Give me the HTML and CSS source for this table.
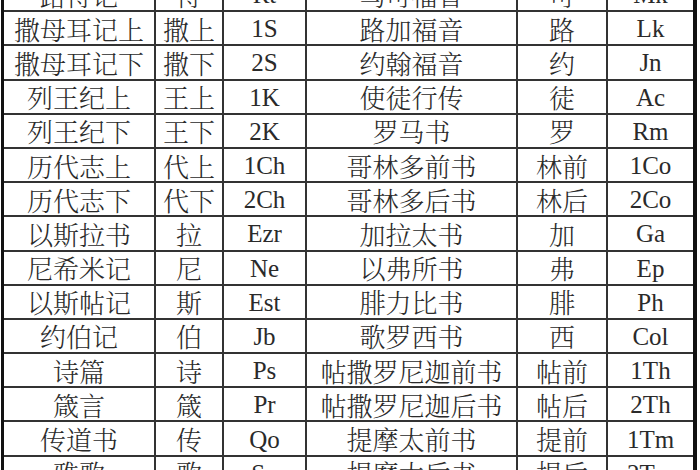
FILE: index.html
```html
<!DOCTYPE html>
<html lang="zh-CN">
<head>
<meta charset="utf-8">
<title>圣经书卷简称表</title>
<link rel="stylesheet" href="styles.css">
</head>
<body>
<div class="sheet">
  <div class="c">路得记</div><div class="c">得</div><div class="c lat">Rt</div><div class="c">马可福音</div><div class="c">可</div><div class="c lat">Mk</div>
  <div class="c">撒母耳记上</div><div class="c">撒上</div><div class="c lat">1S</div><div class="c">路加福音</div><div class="c">路</div><div class="c lat">Lk</div>
  <div class="c">撒母耳记下</div><div class="c">撒下</div><div class="c lat">2S</div><div class="c">约翰福音</div><div class="c">约</div><div class="c lat">Jn</div>
  <div class="c">列王纪上</div><div class="c">王上</div><div class="c lat">1K</div><div class="c">使徒行传</div><div class="c">徒</div><div class="c lat">Ac</div>
  <div class="c">列王纪下</div><div class="c">王下</div><div class="c lat">2K</div><div class="c">罗马书</div><div class="c">罗</div><div class="c lat">Rm</div>
  <div class="c">历代志上</div><div class="c">代上</div><div class="c lat">1Ch</div><div class="c">哥林多前书</div><div class="c">林前</div><div class="c lat">1Co</div>
  <div class="c">历代志下</div><div class="c">代下</div><div class="c lat">2Ch</div><div class="c">哥林多后书</div><div class="c">林后</div><div class="c lat">2Co</div>
  <div class="c">以斯拉书</div><div class="c">拉</div><div class="c lat">Ezr</div><div class="c">加拉太书</div><div class="c">加</div><div class="c lat">Ga</div>
  <div class="c">尼希米记</div><div class="c">尼</div><div class="c lat">Ne</div><div class="c">以弗所书</div><div class="c">弗</div><div class="c lat">Ep</div>
  <div class="c">以斯帖记</div><div class="c">斯</div><div class="c lat">Est</div><div class="c">腓力比书</div><div class="c">腓</div><div class="c lat">Ph</div>
  <div class="c">约伯记</div><div class="c">伯</div><div class="c lat">Jb</div><div class="c">歌罗西书</div><div class="c">西</div><div class="c lat">Col</div>
  <div class="c">诗篇</div><div class="c">诗</div><div class="c lat">Ps</div><div class="c">帖撒罗尼迦前书</div><div class="c">帖前</div><div class="c lat">1Th</div>
  <div class="c">箴言</div><div class="c">箴</div><div class="c lat">Pr</div><div class="c">帖撒罗尼迦后书</div><div class="c">帖后</div><div class="c lat">2Th</div>
  <div class="c">传道书</div><div class="c">传</div><div class="c lat">Qo</div><div class="c">提摩太前书</div><div class="c">提前</div><div class="c lat">1Tm</div>
  <div class="c">雅歌</div><div class="c">歌</div><div class="c lat">So</div><div class="c">提摩太后书</div><div class="c">提后</div><div class="c lat">2Tm</div>
</div>
</body>
</html>
```
FILE: styles.css
```css
html, body {
  margin: 0;
  padding: 0;
  background: #ffffff;
  overflow: hidden;
}

.sheet {
  display: grid;
  grid-template-columns: 152px 68px 83px 211px 90px 85px;
  grid-auto-rows: 34.2px;
  width: 689px;
  margin: -22px 0 0 1px;
  border-left: 3px solid #111;
  border-right: 4px solid #111;
  font-family: "Noto Serif CJK SC", "Noto Sans CJK SC", sans-serif;
  font-weight: 300;
  font-size: 26px;
  color: #2a2a2a;
}

.c {
  box-sizing: border-box;
  display: flex;
  align-items: center;
  justify-content: center;
  border-right: 2px solid #333;
  border-bottom: 2px solid #333;
  white-space: nowrap;
  line-height: 1;
  padding-top: 1px;
}

.c:nth-child(6n) {
  border-right: none;
}

.lat {
  font-family: "Liberation Serif", serif;
  font-weight: 400;
  font-size: 25px;
}
```
